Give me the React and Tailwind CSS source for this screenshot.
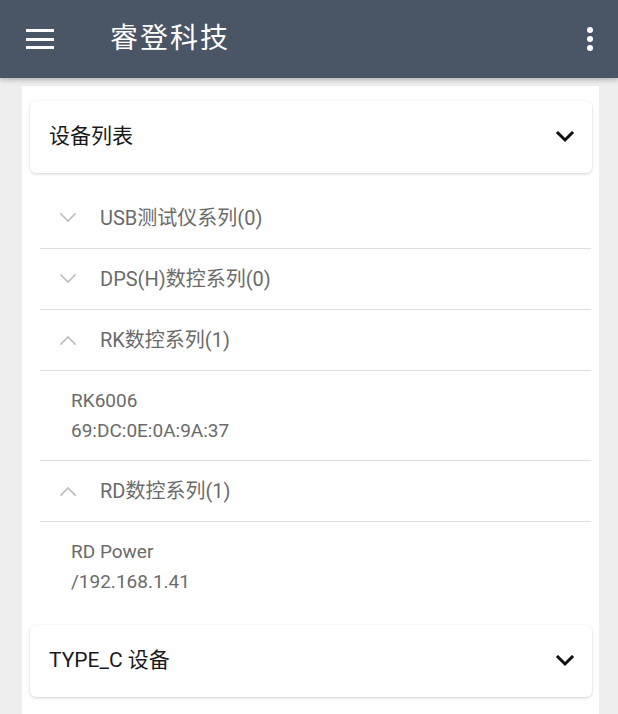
import React from "react"

const font = { fontFamily: 'Roboto, "Noto Sans CJK SC", sans-serif' }

function Chevron({ up = false, bold = false }) {
  return (
    <svg
      width="20"
      height="12"
      viewBox="0 0 20 12"
      fill="none"
      stroke={bold ? "#111111" : "#bdbdbd"}
      strokeWidth={bold ? 3 : 1.6}
      strokeLinecap="square"
    >
      {up ? <polyline points="3,10 10,3 17,10" /> : <polyline points="3,2 10,9 17,2" />}
    </svg>
  )
}

function Card({ title }) {
  return (
    <div className="flex h-[72px] items-center justify-between rounded-md bg-white pl-[19px] pr-[17px] shadow-[0_1px_3px_rgba(0,0,0,0.18)]">
      <span className="text-[21px] text-[#1a1a1a]">{title}</span>
      <Chevron bold />
    </div>
  )
}

function Group({ label, up }) {
  return (
    <div className="flex h-[61px] items-center border-b border-[#e0e0e0]">
      <div className="flex w-[56px] justify-center">
        <Chevron up={up} />
      </div>
      <span className="pl-[4px] text-[20px] text-[#6b6b6b]">{label}</span>
    </div>
  )
}

function Device({ name, addr, last }) {
  return (
    <div className={`flex h-[90px] flex-col justify-center pl-[31px] ${last ? "" : "border-b border-[#e0e0e0]"}`}>
      <span className="text-[19px] leading-[30px] text-[#6b6b6b]">{name}</span>
      <span className="text-[19px] leading-[30px] text-[#6b6b6b]">{addr}</span>
    </div>
  )
}

export default function App() {
  return (
    <div className="min-h-[714px] overflow-hidden bg-[#eeeeef]" style={font}>
      {/* Toolbar */}
      <header className="relative z-10 flex h-[78px] items-center bg-gray-600 shadow-[0_2px_5px_rgba(0,0,0,0.25)]">
        <div className="ml-[26px] flex w-[28px] flex-col gap-[5.5px]">
          <span className="h-[3px] bg-white" />
          <span className="h-[3px] bg-white" />
          <span className="h-[3px] bg-white" />
        </div>
        <h1 className="ml-[56px] text-[28px] tracking-[2px] text-white">睿登科技</h1>
        <div className="ml-auto mr-[25px] flex flex-col gap-[3px]">
          <span className="h-[6px] w-[6px] rounded-full bg-white" />
          <span className="h-[6px] w-[6px] rounded-full bg-white" />
          <span className="h-[6px] w-[6px] rounded-full bg-white" />
        </div>
      </header>

      {/* Content panel */}
      <main className="ml-[22px] mr-[19px] mt-[8px] min-h-[628px] bg-white pl-[8px] pr-[7px] pt-[15px]">
        <Card title="设备列表" />

        <div className="ml-[10px] mr-[1px] mt-[15px]">
          <Group label="USB测试仪系列(0)" />
          <Group label="DPS(H)数控系列(0)" />
          <Group label="RK数控系列(1)" up />
          <Device name="RK6006" addr="69:DC:0E:0A:9A:37" />
          <Group label="RD数控系列(1)" up />
          <Device name="RD Power" addr="/192.168.1.41" last />
        </div>

        <div className="mt-[13px]">
          <Card title="TYPE_C 设备" />
        </div>
      </main>
    </div>
  )
}
